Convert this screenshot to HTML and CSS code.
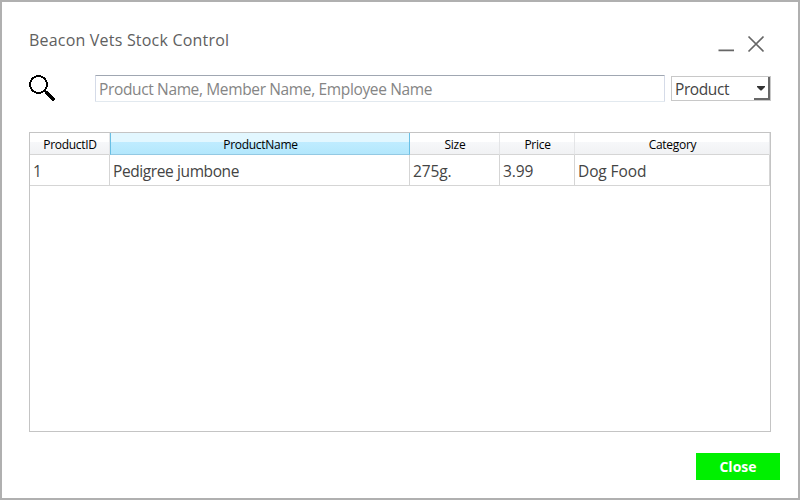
FILE: index.html
```html
<!DOCTYPE html>
<html lang="en">
<head>
<meta charset="utf-8">
<title>Beacon Vets Stock Control</title>
<link rel="stylesheet" href="styles.css">
</head>
<body>
<main class="window">
  <header class="titlebar">
    <h1 class="title">Beacon Vets Stock Control</h1>
    <svg class="controls" width="50" height="24" viewBox="0 0 50 24" aria-hidden="true">
      <path d="M2.500 18.300h15.500M32.500 4.500l15 15M47.500 4.500l-15 15" fill="none" stroke="#666" stroke-width="1.700"/>
    </svg>
  </header>
  <section class="search">
    <svg class="glass" width="28" height="28" viewBox="0 0 28 28" shape-rendering="crispEdges" aria-hidden="true">
      <circle cx="9.500" cy="9.500" r="8.500" fill="none" stroke="#000" stroke-width="2"/>
      <path d="M15.500 15.500l2.500 2.500" stroke="#000" stroke-width="2"/>
      <path d="M17.500 17.500l8 8" stroke="#000" stroke-width="3.600"/>
    </svg>
    <div class="field"><span class="hint">Product Name, Member Name, Employee Name</span></div>
    <div class="select"><span class="choice">Product</span><span class="drop"><svg width="8" height="5" viewBox="0 0 8 5"><path d="M0 0h8v1L4.500 4.500h-1L0 1z" fill="#333"/></svg></span></div>
  </section>
  <section class="table">
    <div class="row head">
      <div class="th">ProductID</div>
      <div class="th active">ProductName</div>
      <div class="th">Size</div>
      <div class="th">Price</div>
      <div class="th">Category</div>
    </div>
    <div class="row data">
      <div class="td">1</div>
      <div class="td product">Pedigree jumbone</div>
      <div class="td">275g.</div>
      <div class="td">3.99</div>
      <div class="td">Dog Food</div>
    </div>
  </section>
  <footer class="footer"><div class="close">Close</div></footer>
</main>
</body>
</html>
```
FILE: styles.css
```css
* { box-sizing: border-box; }
body {
  margin: 0;
  background: #fff;
  font-family: "Open Sans", "Noto Sans", sans-serif;
  font-size: 15.5px;
  color: #444;
}
.window {
  width: 800px;
  height: 500px;
  border: 2px solid #b0b0b0;
  padding: 26px 18px 18px 27px;
  display: flex;
  flex-direction: column;
  white-space: nowrap;
}
.titlebar {
  height: 24px;
  display: flex;
  justify-content: space-between;
  padding-right: 14px;
}
.title {
  margin: 0;
  font-size: 16px;
  font-weight: 400;
  line-height: 24px;
  letter-spacing: 0.2px;
  color: #606060;
}
.controls { margin-top: 4px; }
.search {
  display: flex;
  margin-top: 23px;
  height: 27px;
}
.glass { margin-right: 38px; flex: none; }
.field {
  width: 570px;
  height: 27px;
  padding-left: 3px;
  line-height: 27px;
  color: #858585;
  border: 1px solid #e2e9ef;
  border-top-color: #a0a7b2;
  border-left-color: #d5dbe8;
  border-right-color: #d5dbe8;
  border-radius: 1px;
}
.hint { letter-spacing: -0.36px; }
.select {
  width: 100px;
  height: 25px;
  margin: 1px 0 0 6px;
  padding-left: 3px;
  border: 1px solid #c8c8c8;
  line-height: 25px;
  display: flex;
  justify-content: space-between;
}
.choice { letter-spacing: -0.4px; }
.drop {
  width: 16px;
  height: 23px;
  border-right: 2px solid #686868;
  border-bottom: 2px solid #686868;
  display: flex;
  justify-content: center;
  padding-top: 9px;
}
.table {
  width: 742px;
  height: 300px;
  margin-top: 30px;
  border: 1px solid #c4c4c4;
}
.row {
  display: grid;
  grid-template-columns: 80px 300px 90px 75px 195px;
}
.th {
  height: 22px;
  padding-left: 1px;
  font-size: 12px;
  letter-spacing: -0.28px;
  line-height: 23px;
  text-align: center;
  color: #000;
  background: linear-gradient(#fff 0 9px, #f7f8fa 9px, #f1f2f4 100%);
  border-right: 1px solid #e4e5e7;
  border-bottom: 1px solid #d5d5d5;
}
.active {
  background: linear-gradient(#e2f7ff 0 9px, #bfecff 9px, #b3e7fc 100%);
  border-left: 1px solid #69bfe4;
  border-right-color: #69bfe4;
  border-bottom-color: #93c9e3;
}
.td {
  height: 31px;
  padding-left: 3px;
  line-height: 32px;
  letter-spacing: -0.1px;
  border-bottom: 1px solid #d5d5d5;
  border-right: 1px solid #d5d5d5;
}
.product { letter-spacing: -0.4px; }
.footer {
  display: flex;
  justify-content: flex-end;
  margin-top: 21px;
}
.close {
  width: 84px;
  height: 27px;
  background: #00f000;
  color: #fff;
  font-size: 14px;
  font-weight: 700;
  line-height: 28px;
  text-align: center;
}
```
